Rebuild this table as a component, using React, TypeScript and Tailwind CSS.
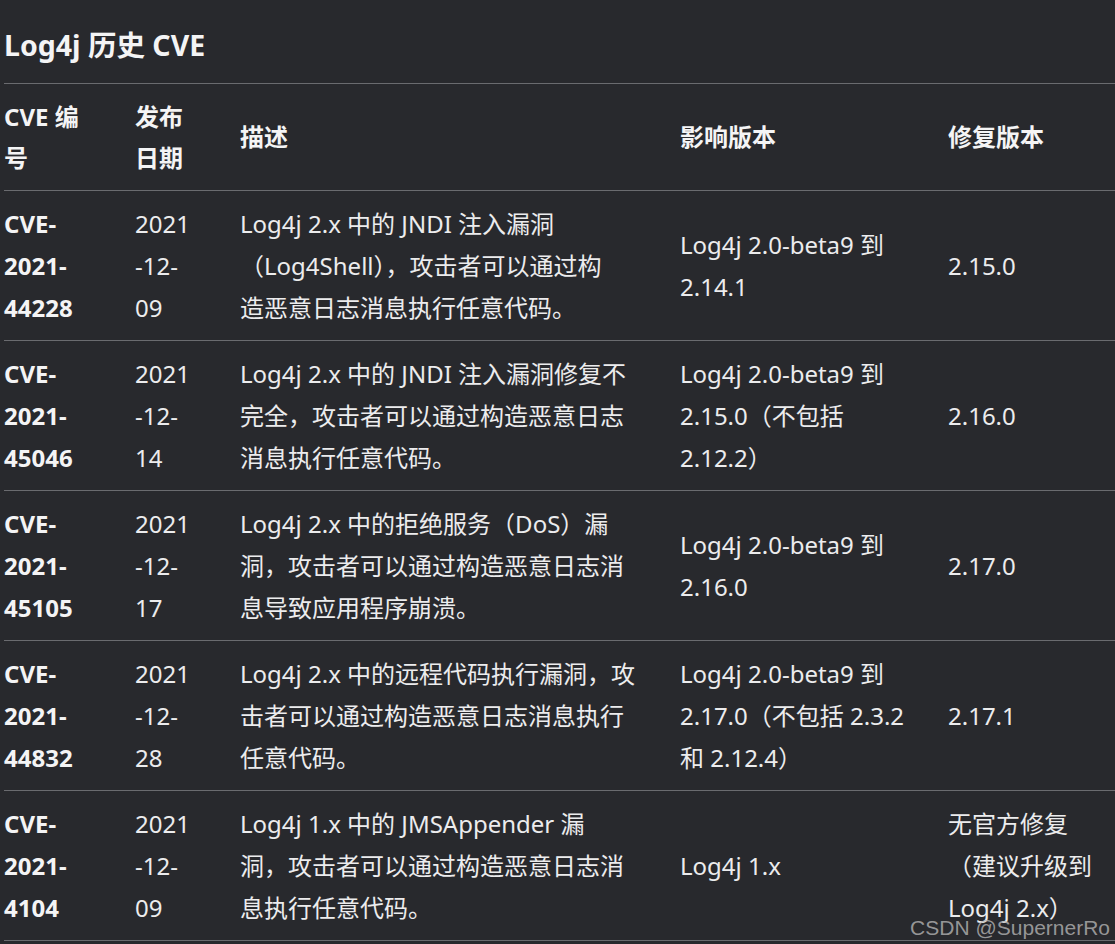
import React from 'react'

type Row = {
  id: string[]
  date: string[]
  desc: string[]
  affected: string[]
  fixed: string[]
}

const rows: Row[] = [
  {
    id: ['CVE-', '2021-', '44228'],
    date: ['2021', '-12-', '09'],
    desc: ['Log4j 2.x 中的 JNDI 注入漏洞', '（Log4Shell），攻击者可以通过构', '造恶意日志消息执行任意代码。'],
    affected: ['Log4j 2.0-beta9 到', '2.14.1'],
    fixed: ['2.15.0'],
  },
  {
    id: ['CVE-', '2021-', '45046'],
    date: ['2021', '-12-', '14'],
    desc: ['Log4j 2.x 中的 JNDI 注入漏洞修复不', '完全，攻击者可以通过构造恶意日志', '消息执行任意代码。'],
    affected: ['Log4j 2.0-beta9 到', '2.15.0（不包括', '2.12.2）'],
    fixed: ['2.16.0'],
  },
  {
    id: ['CVE-', '2021-', '45105'],
    date: ['2021', '-12-', '17'],
    desc: ['Log4j 2.x 中的拒绝服务（DoS）漏', '洞，攻击者可以通过构造恶意日志消', '息导致应用程序崩溃。'],
    affected: ['Log4j 2.0-beta9 到', '2.16.0'],
    fixed: ['2.17.0'],
  },
  {
    id: ['CVE-', '2021-', '44832'],
    date: ['2021', '-12-', '28'],
    desc: ['Log4j 2.x 中的远程代码执行漏洞，攻', '击者可以通过构造恶意日志消息执行', '任意代码。'],
    affected: ['Log4j 2.0-beta9 到', '2.17.0（不包括 2.3.2', '和 2.12.4）'],
    fixed: ['2.17.1'],
  },
  {
    id: ['CVE-', '2021-', '4104'],
    date: ['2021', '-12-', '09'],
    desc: ['Log4j 1.x 中的 JMSAppender 漏', '洞，攻击者可以通过构造恶意日志消', '息执行任意代码。'],
    affected: ['Log4j 1.x'],
    fixed: ['无官方修复', '（建议升级到', 'Log4j 2.x）'],
  },
]

const grid = 'grid grid-cols-[131px_105px_440px_268px_1fr] border-b border-[#6a6b6f]'

function Cell({ lines, bold, head }: { lines: string[]; bold?: boolean; head?: boolean }) {
  return (
    <div
      className={`flex flex-col justify-center pr-4 whitespace-nowrap ${head ? 'py-[11.5px]' : 'py-3'} ${bold ? 'font-bold text-[#f4f4f5]' : 'text-[#ececed]'}`}
    >
      {lines.map((l, i) => (
        <span key={i} className="block">{l}</span>
      ))}
    </div>
  )
}

export default function App() {
  return (
    <div
      className="relative h-[944px] w-[1115px] overflow-hidden bg-[#28292d] pl-1 text-[#ececed]"
      style={{ fontFamily: '"Noto Sans", "Noto Sans CJK SC", sans-serif' }}
    >
      <h2 className="pt-[24px] pb-[17px] text-[28.5px] leading-[42px] font-bold text-[#f4f4f5]">Log4j 历史 CVE</h2>

      <div className="border-t border-[#6a6b6f] text-[24px] leading-[41.67px]">
        <div className={grid}>
          <Cell head bold lines={['CVE 编', '号']} />
          <Cell head bold lines={['发布', '日期']} />
          <Cell head bold lines={['描述']} />
          <Cell head bold lines={['影响版本']} />
          <Cell head bold lines={['修复版本']} />
        </div>
        {rows.map(r => (
          <div key={r.id.join('')} className={grid}>
            <Cell bold lines={r.id} />
            <Cell lines={r.date} />
            <Cell lines={r.desc} />
            <Cell lines={r.affected} />
            <Cell lines={r.fixed} />
          </div>
        ))}
      </div>

      <div
        className="absolute right-[5px] bottom-[6px] text-[21px] leading-none text-[#b4b4b4]/80"
        style={{ fontFamily: '"Liberation Sans", Arial, sans-serif' }}
      >
        CSDN @SupernerRo
      </div>
    </div>
  )
}
